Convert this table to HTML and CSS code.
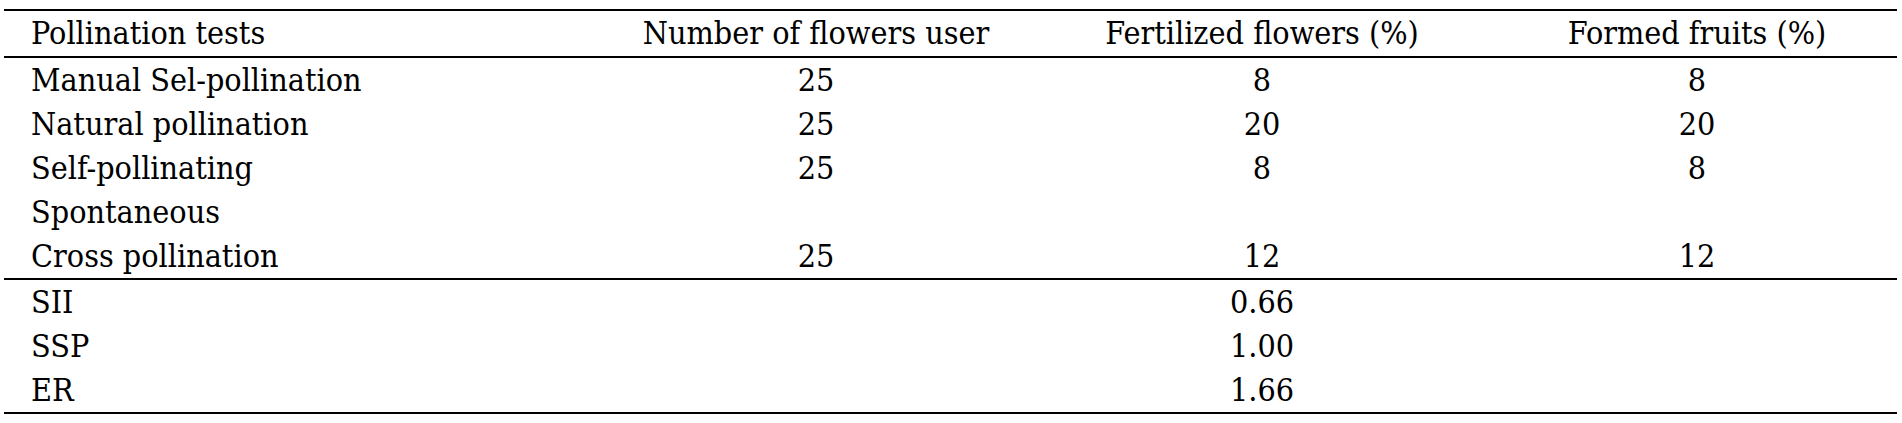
FILE: index.html
```html
<!DOCTYPE html>
<html>
<head>
<meta charset="utf-8">
<link rel="stylesheet" href="styles.css">
</head>
<body>
<table class="data">
  <colgroup>
    <col class="c1"><col class="c2"><col class="c3"><col class="c4">
  </colgroup>
  <thead>
    <tr><th class="lbl">Pollination tests</th><th>Number of flowers user</th><th>Fertilized flowers (%)</th><th>Formed fruits (%)</th></tr>
  </thead>
  <tbody class="main">
    <tr><td class="lbl">Manual Sel-pollination</td><td>25</td><td>8</td><td>8</td></tr>
    <tr><td class="lbl">Natural pollination</td><td>25</td><td>20</td><td>20</td></tr>
    <tr><td class="lbl">Self-pollinating</td><td>25</td><td>8</td><td>8</td></tr>
    <tr><td class="lbl">Spontaneous</td><td></td><td></td><td></td></tr>
    <tr><td class="lbl">Cross pollination</td><td>25</td><td>12</td><td>12</td></tr>
  </tbody>
  <tbody class="idx">
    <tr><td class="lbl">SII</td><td></td><td>0.66</td><td></td></tr>
    <tr><td class="lbl">SSP</td><td></td><td>1.00</td><td></td></tr>
    <tr><td class="lbl">ER</td><td></td><td>1.66</td><td></td></tr>
  </tbody>
</table>
</body>
</html>
```
FILE: styles.css
```css
html, body {
  margin: 0;
  padding: 0;
  background: #fff;
}
body {
  padding: 9px 5px 0 4px;
  font-family: "DejaVu Serif Condensed", "DejaVu Serif", "Liberation Serif", serif;
  font-stretch: condensed;
  font-size: 32px;
  color: #000;
}
.data {
  width: 1893px;
  border-collapse: collapse;
  table-layout: fixed;
  border-top: 2px solid #000;
  border-bottom: 2px solid #000;
}
.c1 { width: 601px; }
.c2 { width: 422px; }
.c3 { width: 470px; }
.c4 { width: 400px; }
.data th, .data td {
  padding: 0;
  height: 44px;
  line-height: 44px;
  font-weight: normal;
  text-align: center;
  white-space: nowrap;
}
.data thead th {
  height: 45px;
  line-height: 45px;
}
.data .lbl {
  text-align: left;
  padding-left: 27px;
}
.data thead tr {
  border-bottom: 2px solid #000;
}
.data tbody.main tr:last-child {
  border-bottom: 2px solid #000;
}
```
